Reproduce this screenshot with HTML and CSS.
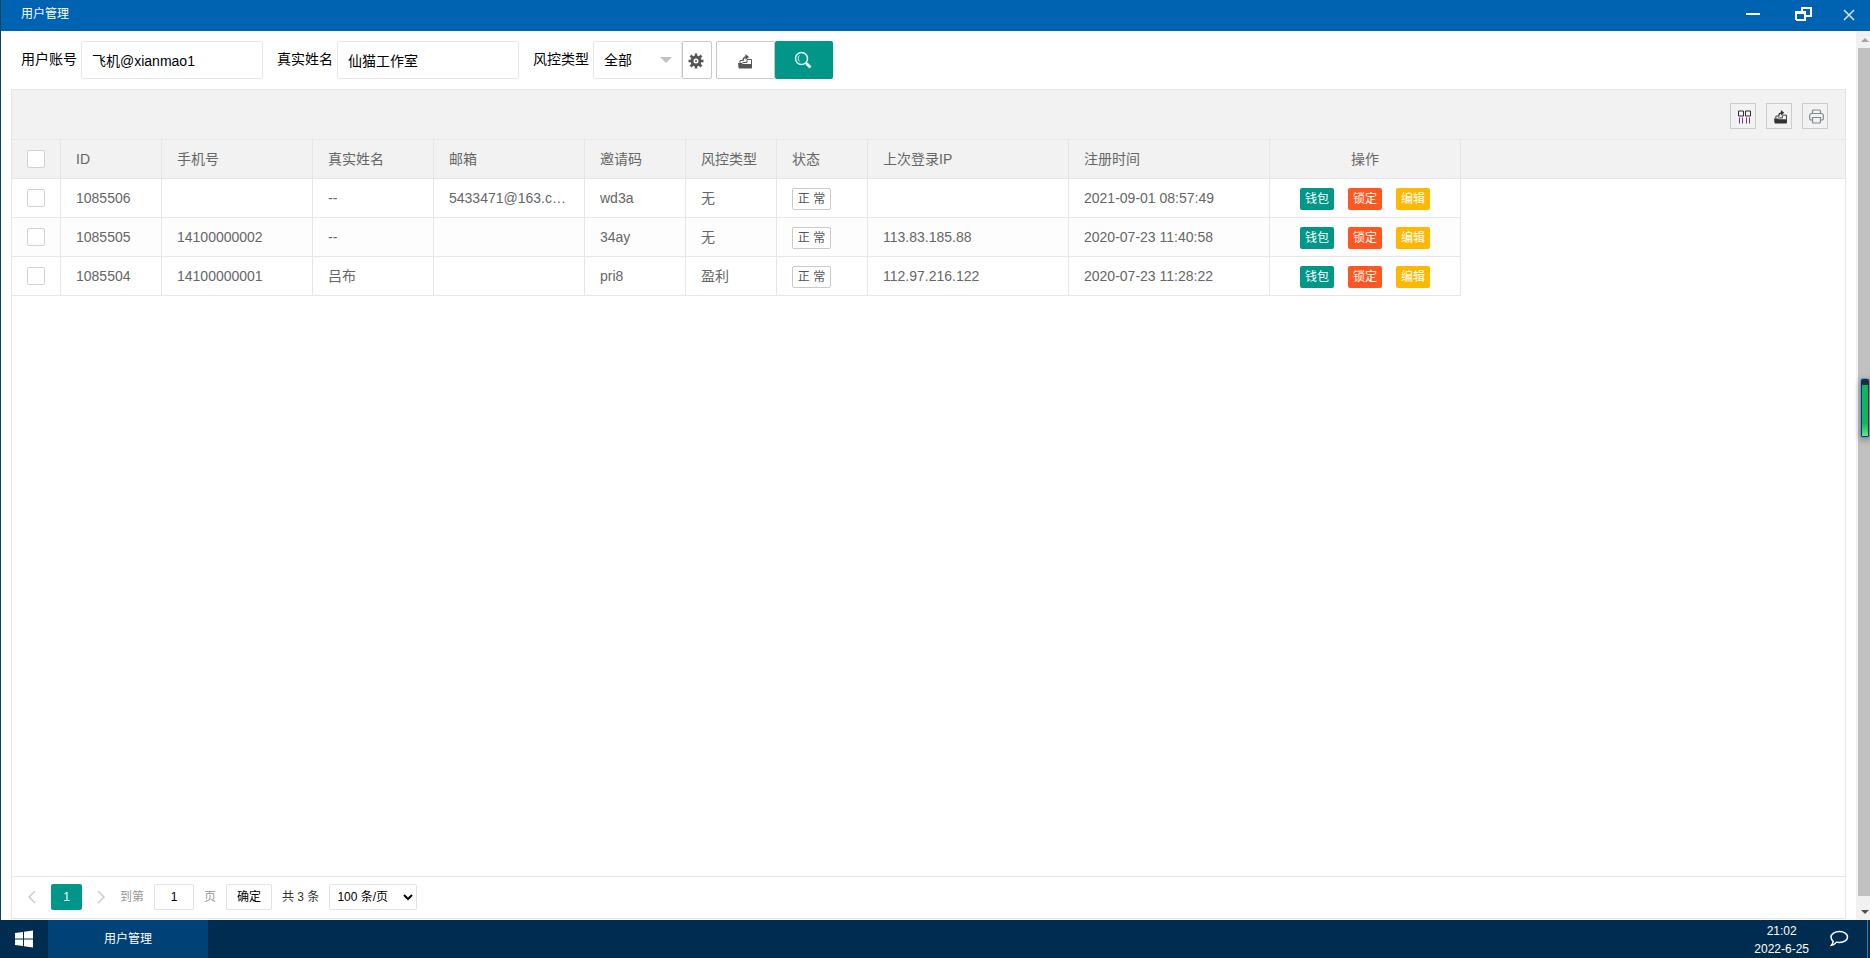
FILE: index.html
```html
<!DOCTYPE html>
<html lang="zh-CN">
<head>
<meta charset="utf-8">
<title>用户管理</title>
<link rel="stylesheet" href="styles.css">
</head>
<body>
<svg class="sprite" aria-hidden="true">
  <symbol id="export" viewBox="0 0 14 15">
    <path d="M0 9h4l1 1h9v3.500a1 1 0 0 1-1 1H1.500a1 1 0 0 1-1-1z" fill="currentColor"/>
    <path d="M2 9V6.500h2.500M9 5.500h4.500V10M4.500 8.500h4.500V6" fill="none" stroke="currentColor"/>
    <path d="M5 7c0-3 1-4 3.500-4" fill="none" stroke="currentColor" stroke-width="1.500"/>
    <path d="M7.500 0l3.500 3-3.500 3z" fill="currentColor"/>
  </symbol>
</svg>
<div class="desktop">
  <section class="window">
    <header class="titlebar">
      <h1 class="titlebar-text">用户管理</h1>
      <div class="window-controls">
        <button class="window-btn minimize" aria-label="最小化"><svg width="14" height="14"><path d="M0 7h14" stroke="#fff" stroke-width="2"/></svg></button>
        <button class="window-btn" aria-label="还原"><svg width="17" height="14" fill="none" stroke="#fff" stroke-width="2"><path d="M7 4V1h9v8h-5M1 13V5M1 13h9V6"/><path d="M0 5.500h11" stroke-width="3"/></svg></button>
        <button class="window-btn close" aria-label="关闭"><svg width="12" height="12"><path d="M1 1l10 10M11 1L1 11" stroke="#d5e7f5" stroke-width="1.500"/></svg></button>
      </div>
    </header>
    <div class="window-body">
      <main class="page">
        <form class="filters">
          <label class="field-label" for="account">用户账号</label>
          <input class="field" id="account" type="text" value="飞机@xianmao1">
          <label class="field-label" for="realname">真实姓名</label>
          <input class="field" id="realname" type="text" value="仙猫工作室">
          <label class="field-label" for="risk">风控类型</label>
          <div class="select-wrap">
            <select class="field select" id="risk"><option>全部</option></select>
          </div>
          <button class="btn btn-gear" type="button" aria-label="设置"><svg width="16" height="16" viewBox="0 0 16 16" fill="none" stroke="#555"><circle cx="8" cy="8" r="4" stroke-width="3"/><path d="M8 .5v3M8 12.500v3M.5 8h3M12.500 8h3M2.500 2.500l2 2M11.500 11.500l2 2M13.500 2.500l-2 2M4.500 11.500l-2 2" stroke-width="2.500"/><circle cx="8" cy="8" r="1" fill="#555" stroke="none"/></svg></button>
          <button class="btn btn-export" type="button" aria-label="导出"><svg width="14" height="15"><use href="#export"/></svg></button>
          <button class="btn btn-search" type="button" aria-label="搜索"><svg width="18" height="18" viewBox="0 0 18 18" fill="none" stroke="#e6f5f3"><circle cx="7.500" cy="7.500" r="6" stroke-width="1.500"/><path d="M5.500 10.500a4 4 0 0 1 0-6"/><path d="M11.500 11.500l1.500 1.500" stroke-width="1.500"/><path d="M12.500 12.500l4 4" stroke-width="3"/></svg></button>
        </form>
        <div class="panel">
          <div class="panel-tools">
            <button class="tool" aria-label="筛选列"><svg width="13" height="14" fill="none" stroke="#33283a"><path d="M.5 1h5v5h-5zM7.500 1h5v5h-5z"/><path d="M1.500 7.500v6M4.500 7.500v6M8.500 7.500v6M11.500 7.500v6" stroke="#6b3a78"/></svg></button>
            <button class="tool" aria-label="导出表格"><svg width="13" height="14"><use href="#export"/></svg></button>
            <button class="tool" aria-label="打印"><svg width="15" height="15" viewBox="0 0 15 15" fill="none" stroke="#7f8c90" stroke-width="1.200"><path d="M3.500 4V2a1 1 0 0 1 1-1h6a1 1 0 0 1 1 1v2M3.500 11H2a1.200 1.200 0 0 1-1.300-1.200V6.500A2 2 0 0 1 2.700 4.500h9.600a2 2 0 0 1 2 2v3.300A1.200 1.200 0 0 1 13 11h-1.500M3.500 8.500h8V13a1 1 0 0 1-1 1h-6a1 1 0 0 1-1-1z"/></svg></button>
          </div>
          <div class="table-area">
            <table class="users">
              <colgroup><col class="w-check"><col class="w-id"><col class="w-contact"><col class="w-name"><col class="w-contact"><col class="w-id"><col class="w-state"><col class="w-state"><col class="w-time"><col class="w-time"><col class="w-actions"><col></colgroup>
              <thead>
                <tr><th class="check-cell"><input class="check" type="checkbox" aria-label="全选"></th><th>ID</th><th>手机号</th><th>真实姓名</th><th>邮箱</th><th>邀请码</th><th>风控类型</th><th>状态</th><th>上次登录IP</th><th>注册时间</th><th class="actions">操作</th><th class="rest"></th></tr>
              </thead>
              <tbody>
                <tr><td class="check-cell"><input class="check" type="checkbox" aria-label="选择 1085506"></td><td>1085506</td><td></td><td>--</td><td>5433471@163.com</td><td>wd3a</td><td>无</td><td><button class="mini state">正 常</button></td><td></td><td>2021-09-01 08:57:49</td><td class="actions"><div class="action-list"><button class="mini wallet">钱包</button><button class="mini lock">锁定</button><button class="mini edit">编辑</button></div></td><td class="rest"></td></tr>
                <tr><td class="check-cell"><input class="check" type="checkbox" aria-label="选择 1085505"></td><td>1085505</td><td>14100000002</td><td>--</td><td></td><td>34ay</td><td>无</td><td><button class="mini state">正 常</button></td><td>113.83.185.88</td><td>2020-07-23 11:40:58</td><td class="actions"><div class="action-list"><button class="mini wallet">钱包</button><button class="mini lock">锁定</button><button class="mini edit">编辑</button></div></td><td class="rest"></td></tr>
                <tr><td class="check-cell"><input class="check" type="checkbox" aria-label="选择 1085504"></td><td>1085504</td><td>14100000001</td><td>吕布</td><td></td><td>pri8</td><td>盈利</td><td><button class="mini state">正 常</button></td><td>112.97.216.122</td><td>2020-07-23 11:28:22</td><td class="actions"><div class="action-list"><button class="mini wallet">钱包</button><button class="mini lock">锁定</button><button class="mini edit">编辑</button></div></td><td class="rest"></td></tr>
              </tbody>
            </table>
          </div>
          <nav class="pager">
            <button class="pager-arrow" aria-label="上一页"><svg width="8" height="14"><path d="M7 1L1 7l6 6" fill="none" stroke="#ccc" stroke-width="1.500"/></svg></button>
            <button class="pager-current">1</button>
            <button class="pager-arrow" aria-label="下一页"><svg width="8" height="14"><path d="M1 1l6 6-6 6" fill="none" stroke="#ccc" stroke-width="1.500"/></svg></button>
            <div class="pager-jump"><label for="jump">到第</label><input class="pager-box" id="jump" type="text" value="1"><span>页</span><button class="pager-go">确定</button></div>
            <span class="pager-total">共 3 条</span>
            <select class="pager-size" aria-label="每页条数"><option>100 条/页</option></select>
          </nav>
        </div>
      </main>
      <div class="scrollbar">
        <svg width="14" height="17"><path d="M5 11l4-4 4 4z" fill="#a3a3a3"/></svg>
        <div class="scroll-thumb"></div>
        <svg width="14" height="24"><path d="M5 14h8l-4 4z" fill="#505050"/></svg>
      </div>
    </div>
  </section>
  <footer class="taskbar">
    <button class="start" aria-label="开始"><svg width="18" height="18" fill="#fff"><path d="M0 3l8-1v6.500H0zM9 1.700L18 .5v8H9zM0 9.500h8V16l-8-1zM9 9.500h9v8l-9-1.200z"/></svg></button>
    <button class="task">用户管理</button>
    <div class="clock"><span>21:02</span><span>2022-6-25</span></div>
    <button class="notice" aria-label="消息"><svg width="20" height="18" viewBox="0 0 20 18"><path d="M10.500 1.500c4.500 0 8 2.300 8 5.500s-3.500 5.500-8 5.500c-1 0-2-.1-3-.4-1.300 1.700-3 2.900-5 3.200 1-1.300 1.600-2.500 1.700-4C2.900 10.300 2 8.700 2 7c0-3.200 4-5.500 8.500-5.500z" fill="none" stroke="#fff" stroke-width="1.500"/></svg></button>
    <div class="show-desktop"></div>
  </footer>
  <div class="meter"><div class="meter-fill"></div></div>
</div>
</body>
</html>
```

FILE: styles.css
```css
* { box-sizing: border-box; }

body {
  margin: 0;
  color: #000;
  font: 14px/20px "Liberation Sans", "Noto Sans CJK SC", sans-serif;
}

button, input, select {
  margin: 0;
  padding: 0;
  border: 0;
  border-radius: 2px;
  background: none;
  color: inherit;
  font: inherit;
}

button { display: flex; align-items: center; justify-content: center; cursor: pointer; }
svg { display: block; }
.sprite { position: absolute; width: 0; height: 0; }

.desktop { display: flex; flex-direction: column; height: 100vh; overflow: hidden; position: relative; }
.window { flex: 1; min-height: 0; display: flex; flex-direction: column; border-left: 1px solid #00475e; }

.titlebar {
  display: flex;
  align-items: center;
  justify-content: space-between;
  height: 31px;
  padding: 0 15px 4px 20px;
  background: #0063b1;
  color: #fff;
}
.titlebar-text { margin: 0; font-size: 12px; font-weight: 400; }
.window-controls { display: flex; align-items: center; gap: 31px; }
.minimize { margin-right: 4px; }
.close { padding-top: 2px; }

.window-body { flex: 1; min-height: 0; display: flex; background: #fff; }
.page { flex: 1; min-width: 0; display: flex; flex-direction: column; padding: 10px 10px 1px; }

.filters { display: flex; align-items: center; padding-left: 10px; }
.field-label { margin-right: 4px; padding-bottom: 3px; }
.field { width: 182px; height: 38px; margin-right: 14px; padding: 0 10px; border: 1px solid #e6e6e6; background: #fff; }
.select-wrap { position: relative; }
.select { width: 89px; margin: 0; appearance: none; }
.select-wrap::after {
  content: "";
  position: absolute;
  top: 16px;
  right: 10px;
  border: 6px solid transparent;
  border-top-color: #c2c2c2;
  border-bottom: 0;
  pointer-events: none;
}
.btn { height: 38px; border: 1px solid #c9c9c9; background: #fff; color: #555; }
.btn-gear { width: 30px; margin-right: 4px; padding: 2px 2px 0 0; }
.btn-export { width: 59px; padding: 3px 2px 0 0; }
.btn-search { width: 58px; padding: 0 2px 1px 0; border: 0; background: #009688; }

.panel { flex: 1; min-height: 0; display: flex; flex-direction: column; margin-top: 10px; border: 1px solid #e6e6e6; }
.panel-tools { display: flex; justify-content: flex-end; gap: 10px; padding: 13px 17px 10px; border-bottom: 1px solid #e6e6e6; background: #f2f2f2; }
.tool { width: 26px; height: 26px; padding: 1px 0 0 2px; border: 1px solid #ccc; border-radius: 0; color: #333; }

.table-area { flex: 1; min-height: 0; overflow: hidden; }
.users { width: 100%; table-layout: fixed; border-spacing: 0; color: #666; }
.w-check { width: 49px; }
.w-id { width: 101px; }
.w-contact { width: 151px; }
.w-name { width: 121px; }
.w-state { width: 91px; }
.w-time { width: 201px; }
.w-actions { width: 191px; }
.users th, .users td {
  height: 39px;
  padding: 0 15px;
  border-right: 1px solid #e6e6e6;
  border-bottom: 1px solid #e6e6e6;
  font-weight: 400;
  text-align: left;
  white-space: nowrap;
  overflow: hidden;
  text-overflow: ellipsis;
}
.users th { background: #f2f2f2; }
.users th.rest { border-right: 0; }
.users td.rest { border: 0; background: #fff; }
.users tbody tr:nth-child(even) { background: #fdfdfd; }
.users .actions { text-align: center; }
.check { display: block; width: 18px; height: 18px; appearance: none; border: 1px solid #d2d2d2; background: #fff; }

.action-list { display: flex; justify-content: center; gap: 14px; }
.mini { width: 34px; height: 22px; margin-top: 2px; color: #fff; font-size: 12px; line-height: 20px; }
.state { width: 39px; border: 1px solid #c9c9c9; background: #fff; color: #555; }
.wallet { background: #009688; }
.lock { background: #ff5722; }
.edit { background: #ffb800; }

.pager { display: flex; align-items: center; height: 42px; padding: 0 16px 1px; border-top: 1px solid #e6e6e6; color: #333; font-size: 12px; }
.pager-arrow { width: 8px; height: 26px; }
.pager-current { width: 31px; height: 26px; margin: 0 15px; background: #009688; color: #fff; }
.pager-jump { display: flex; align-items: center; gap: 10px; margin-left: 15px; color: #999; }
.pager-box { width: 40px; height: 26px; border: 1px solid #e2e2e2; color: #000; text-align: center; }
.pager-go { width: 46px; height: 26px; border: 1px solid #e2e2e2; color: #000; }
.pager-total { margin: 0 10px; }
.pager-size { width: 88px; height: 26px; padding: 0 3px; border: 1px solid #e2e2e2; background: #fff; color: #000; }

.scrollbar { display: flex; flex-direction: column; width: 14px; background: #f1f1f1; }
.scroll-thumb { flex: 1; margin-left: 2px; background: #c1c1c1; }

.taskbar { display: flex; height: 38px; background: #002c4f; color: #fff; font-size: 12px; line-height: 18px; }
.start { width: 48px; }
.task { width: 160px; border-radius: 0; background: #004275; }
.clock { display: flex; flex-direction: column; align-items: center; margin-left: auto; padding-top: 2px; }
.notice { width: 40px; margin: 0 8px 0 10px; }
.show-desktop { width: 3px; border-left: 1px solid #56738a; }

.meter {
  position: absolute;
  top: 378px;
  right: 0;
  width: 10px;
  height: 60px;
  padding: 6px 1px 1px;
  border: 1px solid #4aa8f0;
  border-radius: 3px;
  background: #222838;
  box-shadow: 0 2px 6px #0005;
}
.meter-fill { height: 100%; background: linear-gradient(#14b45c 75%, #66e878); }
```
